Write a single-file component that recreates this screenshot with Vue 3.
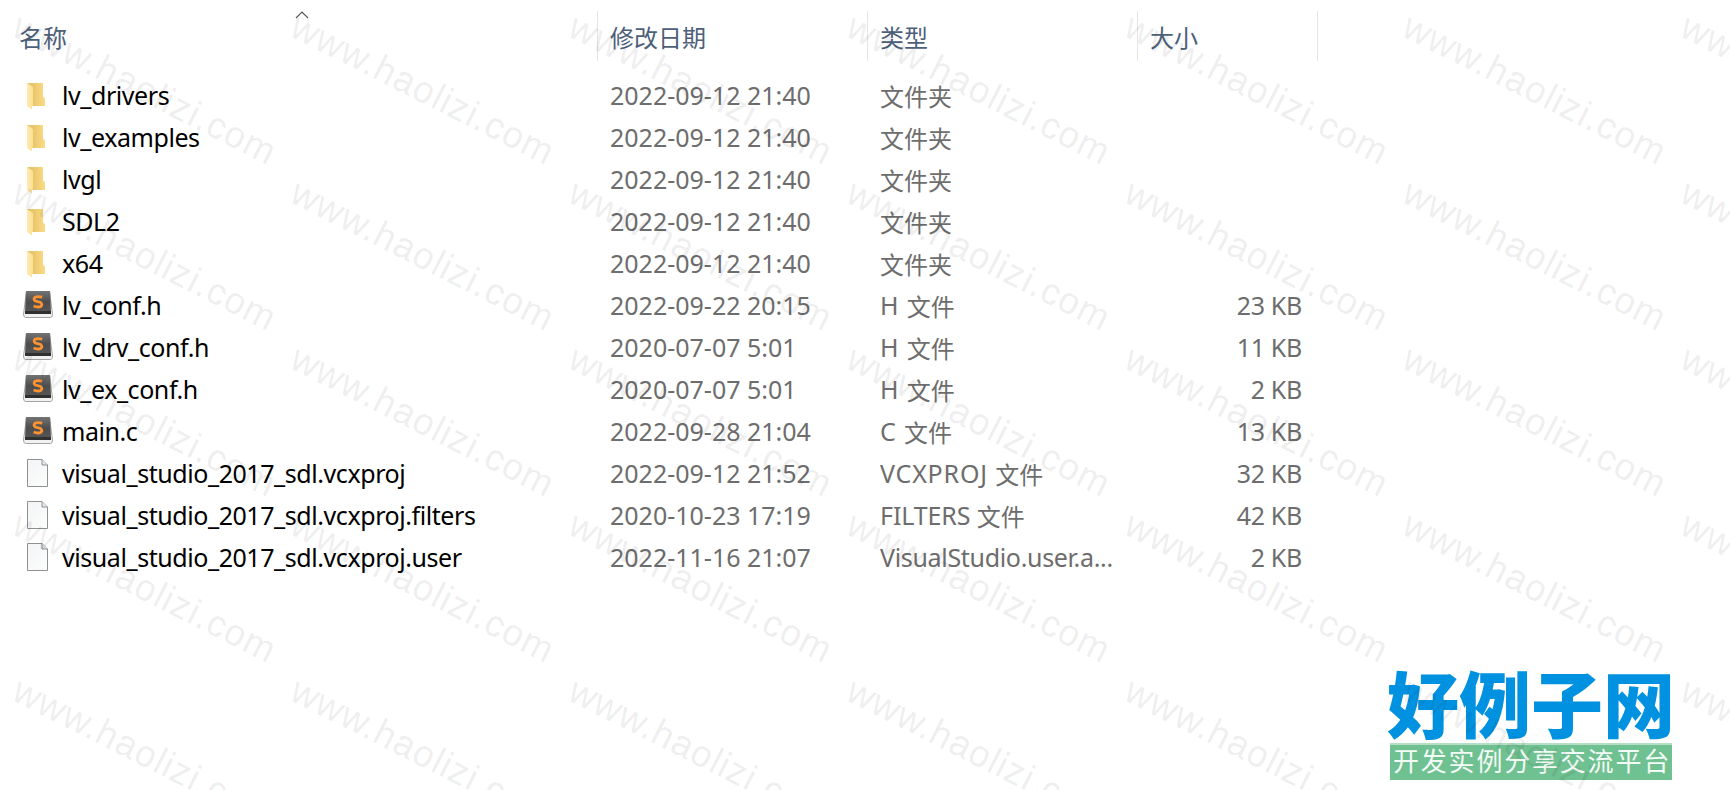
<script setup>
const folder = (name) => ({ icon: "folder", name, date: "2022-09-12 21:40", type: "", typeCn: "文件夹", size: "" });
const files = [
    folder("lv_drivers"),
    folder("lv_examples"),
    folder("lvgl"),
    folder("SDL2"),
    folder("x64"),
    { icon: "sublime", name: "lv_conf.h", date: "2022-09-22 20:15", type: "H ", typeCn: "文件", size: "23 KB", spacing: 0.8 },
    { icon: "sublime", name: "lv_drv_conf.h", date: "2020-07-07 5:01", type: "H ", typeCn: "文件", size: "11 KB", spacing: 0.8 },
    { icon: "sublime", name: "lv_ex_conf.h", date: "2020-07-07 5:01", type: "H ", typeCn: "文件", size: "2 KB", spacing: 0.8 },
    { icon: "sublime", name: "main.c", date: "2022-09-28 21:04", type: "C ", typeCn: "文件", size: "13 KB", spacing: 0.8 },
    { icon: "page", name: "visual_studio_2017_sdl.vcxproj", date: "2022-09-12 21:52", type: "VCXPROJ ", typeCn: "文件", size: "32 KB", spacing: 0.8 },
    { icon: "page", name: "visual_studio_2017_sdl.vcxproj.filters", date: "2020-10-23 17:19", type: "FILTERS ", typeCn: "文件", size: "42 KB", spacing: -0.1 },
    { icon: "page", name: "visual_studio_2017_sdl.vcxproj.user", date: "2022-11-16 21:07", type: "VisualStudio.user.a...", typeCn: "", size: "2 KB", spacing: -0.32 },
];
</script>

<template>
    <div class="explorer">
        <div class="grid head">
            <div class="th name">
                名称
                <svg class="sort" width="14" height="8" viewBox="0 0 14 8">
                    <path d="M1 7L7 1L13 7" fill="none" stroke="#555" stroke-width="1.1" />
                </svg>
            </div>
            <div class="th">修改日期</div>
            <div class="th">类型</div>
            <div class="th">大小</div>
        </div>
        <div v-for="file in files" :key="file.name" class="grid row">
            <div class="file">
                <svg v-if="file.icon === 'folder'" class="icon" width="32" height="32" viewBox="0 0 32 32">
                    <path d="M5 3H21V16.5L23 18.5V26H5Z" fill="url(#folderBack)" />
                    <path d="M5 3L11 7V25L10 26V29.5L5 26Z" fill="url(#folderFront)" />
                </svg>
                <svg v-else-if="file.icon === 'sublime'" class="icon" width="32" height="32" viewBox="0 0 32 32">
                    <path d="M4.5 1.5H27.5L30.5 24Q30.5 27.5 28.5 27.5H3.5Q1.5 27.5 1.5 24Z" fill="#f1f1f1" stroke="#a5a5a5" />
                    <path d="M5 1H27Q28 1 28.2 2L29 23H3L3.8 2Q4 1 5 1Z" fill="url(#sublimeKey)" />
                    <path d="M3 21H29V24H3Z" fill="#303030" />
                    <path d="M20.2 7.2Q15.5 5.8 13 7.3Q11 9 13.3 11L18.6 12.5Q21 14.5 18.8 16.4Q16 17.8 11.6 16" fill="none" stroke="#ff9330" stroke-width="2.8" />
                </svg>
                <svg v-else class="icon" width="32" height="32" viewBox="0 0 32 32">
                    <path d="M5.5 1.5H20L25.5 7V28.5H5.5Z" fill="url(#pageFill)" stroke="#8d9194" />
                    <path d="M20 1.5V7H25.5" fill="#e6e6e6" stroke="#8d9194" />
                </svg>
                <span class="label">{{ file.name }}</span>
            </div>
            <div class="cell date">{{ file.date }}</div>
            <div class="cell"><span :style="{ letterSpacing: (file.spacing || 0) + 'px' }">{{ file.type }}</span><span class="cn">{{ file.typeCn }}</span></div>
            <div class="cell size">{{ file.size }}</div>
        </div>

        <div class="logo">
            <div class="title">好例子网</div>
            <div class="slogan">开发实例分享交流平台</div>
        </div>

        <svg class="watermark" width="1730" height="790">
            <defs>
                <linearGradient id="folderBack">
                    <stop offset="0.3" stop-color="#e8c46a" />
                    <stop offset="1" stop-color="#fbdc86" />
                </linearGradient>
                <linearGradient id="folderFront">
                    <stop offset="0" stop-color="#ffebb0" />
                    <stop offset="1" stop-color="#fbdf94" />
                </linearGradient>
                <linearGradient id="sublimeKey" x2="0" y2="1">
                    <stop offset="0" stop-color="#747474" />
                    <stop offset="0.5" stop-color="#4d4d4d" />
                    <stop offset="1" stop-color="#565656" />
                </linearGradient>
                <linearGradient id="pageFill" x2="1" y2="1">
                    <stop offset="0" stop-color="#f2f4f5" />
                    <stop offset="1" stop-color="#fdfdfd" />
                </linearGradient>
            </defs>
            <template v-for="y in 5" :key="y">
                <text v-for="x in 7" :key="x" :transform="`translate(${10 + (x - 1) * 278} ${35 + (y - 1) * 166}) rotate(26.8)`">www.haolizi.com</text>
            </template>
        </svg>
    </div>
</template>

<style>
body {
    margin: 0;
    background: #fff;
}
</style>

<style scoped>
.explorer {
    position: relative;
    width: 1730px;
    height: 790px;
    overflow: hidden;
    background: #fff;
    font-family: "Noto Sans", "Noto Sans CJK SC", sans-serif;
    font-size: 25px;
    color: #000;
}
.grid {
    display: grid;
    grid-template-columns: 598px 270px 270px 180px;
}
.head {
    padding-top: 11px;
    margin-bottom: 14px;
}
.th {
    box-sizing: border-box;
    height: 50px;
    padding-left: 12px;
    border-right: 1px solid #e5e5e5;
    font-family: "Noto Sans CJK SC", sans-serif;
    font-size: 24px;
    line-height: 51px;
    color: #4c607a;
}
.th.name {
    position: relative;
    padding-left: 19px;
}
.sort {
    position: absolute;
    left: 295px;
    top: 0;
}
.row {
    height: 42px;
    line-height: 40px;
    white-space: pre;
}
.file {
    display: flex;
    align-items: flex-start;
    padding-left: 22px;
}
.icon {
    flex: none;
    margin: 5px 8px 0 0;
}
.label {
    letter-spacing: -0.43px;
}
.cell {
    padding-left: 12px;
    color: #6d6d6d;
}
.size {
    padding: 0 16px 0 0;
    text-align: right;
    letter-spacing: -0.3px;
}
.cn {
    font-family: "Noto Sans CJK SC", sans-serif;
    font-size: 24px;
    line-height: 1;
    vertical-align: -1px;
}
.logo {
    position: absolute;
    left: 1390px;
    top: 667px;
    width: 282px;
    font-family: "Noto Sans CJK SC", sans-serif;
}
.title {
    height: 76px;
    margin-left: -3px;
    line-height: 67px;
    font-size: 72px;
    font-weight: 900;
    letter-spacing: 0;
    color: #0092e0;
    white-space: nowrap;
}
.slogan {
    box-sizing: border-box;
    height: 37px;
    padding-left: 3px;
    border-top: 2px solid #b5dec5;
    background: #70c191;
    font-size: 26px;
    line-height: 29px;
    letter-spacing: 1.8px;
    color: #f2fbf5;
    white-space: nowrap;
}
.watermark {
    position: absolute;
    left: 0;
    top: 0;
    pointer-events: none;
}
.watermark text {
    font-family: "Liberation Sans", Arial, sans-serif;
    font-size: 37px;
    letter-spacing: 1.1px;
    fill: rgba(0, 0, 0, 0.075);
    stroke: rgba(0, 0, 0, 0.03);
    stroke-width: 1px;
}
</style>
